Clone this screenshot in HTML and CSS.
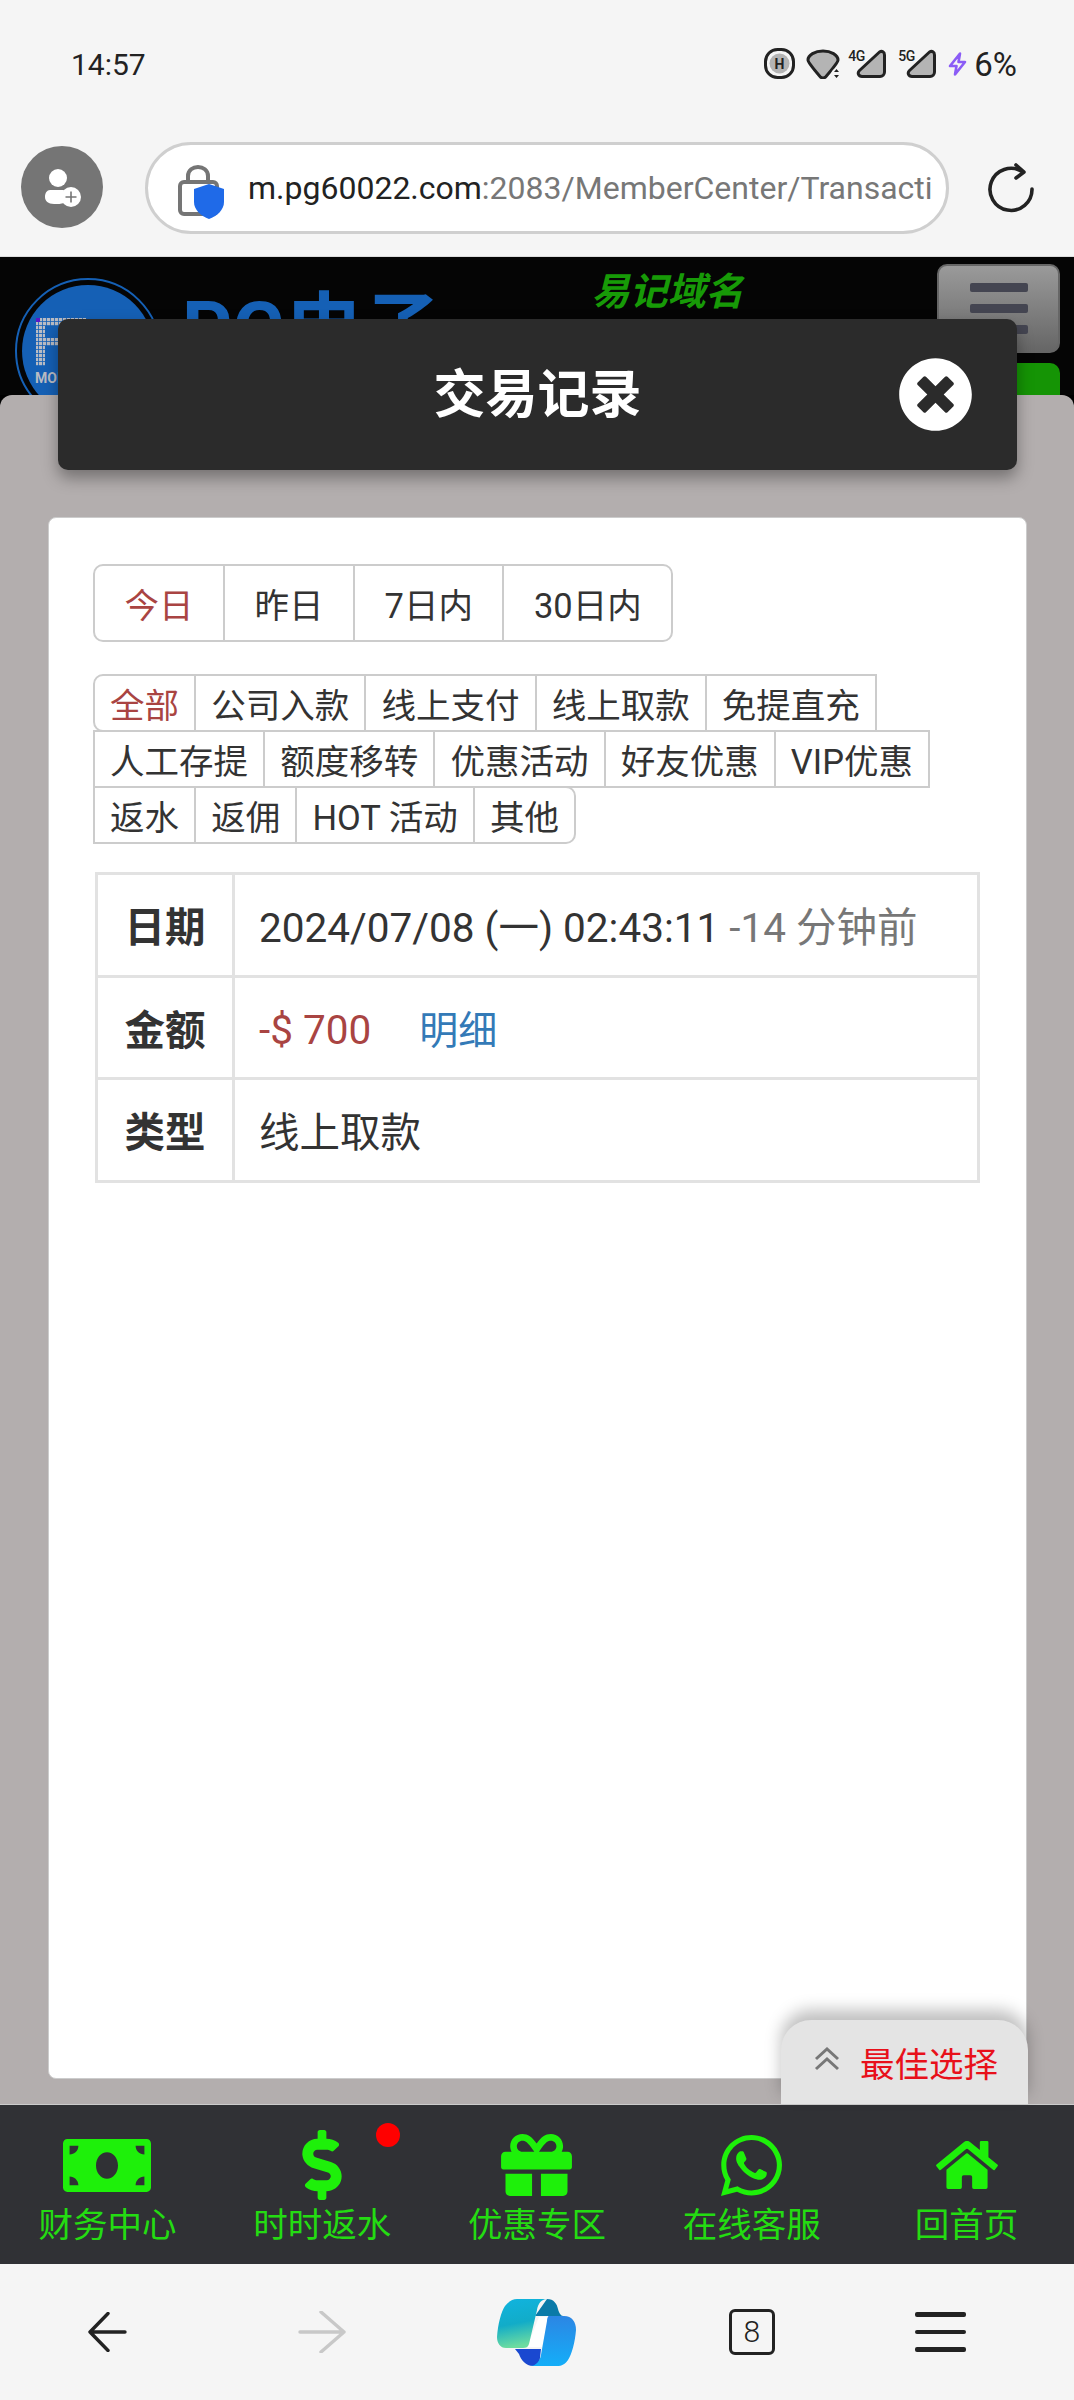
FILE: index.html
```html
<!DOCTYPE html>
<html lang="zh-CN">
<head>
    <meta charset="UTF-8">
    <meta name="viewport" content="width=device-width, initial-scale=1.0">
    <title>交易记录</title>
    <link rel="stylesheet" href="styles.css">
</head>
<body>
    <!-- phone status bar -->
    <div class="status-bar">
        <span class="clock">14:57</span>
        <div class="status-icons">
            <svg class="st-hd" viewBox="0 0 31 31"><rect x="1.5" y="1.5" width="28" height="28" rx="12" fill="none" stroke="#222" stroke-width="3"/><circle cx="15.5" cy="15.5" r="10" fill="#b4b4b4"/><text x="15.500" y="20.500" class="st-hd-text">H</text></svg>
            <svg class="st-wifi" viewBox="0 0 34 30"><path d="M2 11C2 6 9 2 17 2s15 4 15 9c0 2-9 13-12 16.500-1.800 2-4.200 2-6 0C11 24 2 13 2 11z" fill="#b4b4b4" stroke="#222" stroke-width="3" stroke-linejoin="round"/><circle cx="30.500" cy="24.500" r="5" fill="#f5f5f5"/><path d="M30.500 20l-2.500 3h5zM30.500 29l-2.500-3h5z" fill="#222"/></svg>
            <div class="st-signal">
                <span class="st-net">4G</span>
                <svg viewBox="0 0 31 30"><path d="M23.500 3L3.500 21.500C1 24 2.500 27.500 6 27.500h18c2.500 0 4.500-2 4.500-4.500V6c0-3-2.500-4.500-5-3z" fill="#b4b4b4" stroke="#222" stroke-width="3" stroke-linejoin="round"/></svg>
            </div>
            <div class="st-signal">
                <span class="st-net">5G</span>
                <svg viewBox="0 0 31 30"><path d="M23.500 3L3.500 21.500C1 24 2.500 27.500 6 27.500h18c2.500 0 4.500-2 4.500-4.500V6c0-3-2.500-4.500-5-3z" fill="#b4b4b4" stroke="#222" stroke-width="3" stroke-linejoin="round"/></svg>
            </div>
            <svg class="st-bolt" viewBox="0 0 19 24"><path d="M12 1.500L2 14h6.500L7 22.500 17 10h-6.500z" fill="none" stroke="#8b5cf6" stroke-width="2.600" stroke-linejoin="round"/></svg>
            <span class="battery">6%</span>
        </div>
    </div>

    <!-- browser address bar -->
    <div class="toolbar">
        <div class="avatar">
            <svg viewBox="0 0 82 82" width="82" height="82">
                <circle cx="37" cy="32" r="9" fill="#fff"/>
                <path d="M29 44h14c-2 4-2 9 0 13-3 1-6 1-10 1-6 0-9-3-9-7s2-7 5-7z" fill="#fff"/>
                <circle cx="50" cy="51" r="10" fill="#fff"/>
                <path d="M50 45.500v11M44.500 51h11" stroke="#757575" stroke-width="1.600"/>
            </svg>
        </div>
        <div class="url-box">
            <svg class="lock" viewBox="0 0 46 55" width="46" height="55">
                <path d="M10 20v-8c0-12 20-12 20 0v8" fill="none" stroke="#757575" stroke-width="4"/>
                <rect x="2" y="18" width="37" height="32" rx="4" fill="none" stroke="#757575" stroke-width="4"/>
                <path d="M31 20l15 5v13c0 8-7 14-15 17-8-3-15-9-15-17V25z" fill="#1f6ae8"/>
            </svg>
            <div class="url"><b>m.pg60022.com</b>:2083/MemberCenter/Transacti</div>
        </div>
        <svg class="reload" viewBox="0 0 50 50" width="50" height="50">
            <path d="M36 8.500A21 21 0 1 0 46 26" fill="none" stroke="#222" stroke-width="3.600" stroke-linecap="round"/>
            <path d="M30 2l8 7-8 6" fill="none" stroke="#222" stroke-width="3.600" stroke-linecap="round" stroke-linejoin="round"/>
        </svg>
    </div>

    <div class="site">
        <header class="site-header">
            <svg class="logo" viewBox="0 0 146 146" width="146" height="146">
                <defs>
                    <pattern id="dots" width="4" height="4" patternUnits="userSpaceOnUse"><rect width="3.200" height="3.200" fill="#b9bcc4"/></pattern>
                </defs>
                <circle cx="73" cy="73" r="72" fill="none" stroke="#1560b5" stroke-width="2"/>
                <circle cx="73" cy="73" r="66" fill="#1560b5"/>
                <path d="M21 40h50v28H30v20h-9zM30 48v12h32V48z" fill="url(#dots)"/>
                <rect x="21" y="40" width="4" height="4" fill="#5a18c8"/>
                <text x="20" y="105" class="logo-text">MOBILE</text>
            </svg>
            <div class="site-name">PG电子</div>
            <div class="slogan">易记域名</div>
            <div class="header-right">
                <div class="menu-btn"><i></i><i></i><i></i></div>
                <div class="green-btn"></div>
            </div>
        </header>

        <section class="panel">
            <div class="panel-title">
                <h2>交易记录</h2>
                <svg class="close-icon" viewBox="0 0 512 512" width="75" height="75"><path fill="#fff" d="M256 8C119 8 8 119 8 256s111 248 248 248 248-111 248-248S393 8 256 8zm121.600 313.100c4.700 4.700 4.700 12.300 0 17L338 377.600c-4.700 4.700-12.300 4.700-17 0L256 312l-65.100 65.600c-4.700 4.700-12.300 4.700-17 0L134.400 338c-4.700-4.700-4.700-12.300 0-17l65.600-65-65.600-65.100c-4.700-4.700-4.700-12.300 0-17l39.600-39.600c4.700-4.700 12.300-4.700 17 0l65 65.700 65.100-65.600c4.700-4.700 12.300-4.700 17 0l39.600 39.600c4.700 4.700 4.700 12.300 0 17L312 256l65.600 65.100z"/></svg>
            </div>

            <div class="card">
                <div class="date-tabs">
                    <a class="active">今日</a><a>昨日</a><a>7日内</a><a>30日内</a>
                </div>
                <div class="type-tabs">
                    <a class="active">全部</a><a>公司入款</a><a>线上支付</a><a>线上取款</a><a>免提直充</a>
                    <a>人工存提</a><a>额度移转</a><a>优惠活动</a><a>好友优惠</a><a>VIP优惠</a>
                    <a>返水</a><a>返佣</a><a>HOT 活动</a><a>其他</a>
                </div>
                <table class="record">
                    <tr>
                        <th>日期</th>
                        <td>2024/07/08 (一) 02:43:11 <span class="ago">-14 分钟前</span></td>
                    </tr>
                    <tr>
                        <th>金额</th>
                        <td><span class="amount">-$ 700</span><a class="detail">明细</a></td>
                    </tr>
                    <tr>
                        <th>类型</th>
                        <td>线上取款</td>
                    </tr>
                </table>
            </div>

            <div class="best-pick">
                <svg viewBox="0 0 26 24" width="26" height="24"><path d="M2 12L13 2l11 10M2 22l11-10 11 10" fill="none" stroke="#777" stroke-width="3"/></svg>
                <span>最佳选择</span>
            </div>
        </section>
    </div>

    <!-- site bottom nav -->
    <nav class="bottom-nav">
        <a class="nav-item">
            <span class="nav-icon"><svg viewBox="0 64 640 384" width="88" height="53"><path d="M608 64H32C14.330 64 0 78.330 0 96v320c0 17.670 14.330 32 32 32h576c17.670 0 32-14.330 32-32V96c0-17.670-14.330-32-32-32zM48 400v-64c35.350 0 64 28.650 64 64H48zm0-224v-64h64c0 35.350-28.650 64-64 64zm272 176c-44.190 0-80-42.990-80-96 0-53.020 35.820-96 80-96s80 42.980 80 96c0 53.030-35.830 96-80 96zm272 48h-64c0-35.350 28.650-64 64-64v64zm0-224c-35.350 0-64-28.650-64-64h64v64z"/></svg></span>
            财务中心
        </a>
        <a class="nav-item">
            <span class="nav-icon"><svg viewBox="0 0 288 512" width="40" height="70"><path d="M209.200 233.400l-108-31.600C88.700 198.200 80 186.500 80 173.500c0-16.300 13.200-29.500 29.500-29.500h66.300c12.200 0 24.200 3.700 34.200 10.500 6.100 4.100 14.300 3.100 19.500-2l34.800-34c7.100-6.900 6.100-18.400-1.800-24.500C238 74.800 207.400 64.100 176 64V16c0-8.800-7.200-16-16-16h-32c-8.800 0-16 7.200-16 16v48h-2.500C45.800 64-5.400 118.700.5 183.600c4.200 46.100 39.400 83.600 83.800 96.600l102.500 30c12.500 3.700 21.200 15.300 21.200 28.300 0 16.300-13.200 29.500-29.500 29.500h-66.300C100 368 88 364.300 78 357.500c-6.100-4.100-14.300-3.100-19.500 2l-34.800 34c-7.100 6.900-6.100 18.400 1.800 24.500 24.500 19.200 55.100 29.900 86.500 30v48c0 8.800 7.200 16 16 16h32c8.800 0 16-7.200 16-16v-48.200c46.600-.9 90.300-28.600 105.700-72.700 21.500-61.600-14.600-124.800-72.500-141.700z"/></svg><i class="red-dot"></i></span>
            时时返水
        </a>
        <a class="nav-item">
            <span class="nav-icon"><svg viewBox="0 32 512 448" width="71" height="62"><path d="M32 448c0 17.700 14.300 32 32 32h160V320H32v128zm256 32h160c17.700 0 32-14.300 32-32V320H288v160zm192-320h-42.100c6.200-12.100 10.100-25.500 10.100-40 0-48.500-39.500-88-88-88-41.600 0-68.500 21.300-103 68.300-34.500-47-61.400-68.300-103-68.300-48.500 0-88 39.500-88 88 0 14.500 3.800 27.900 10.100 40H32c-17.700 0-32 14.300-32 32v80c0 8.800 7.200 16 16 16h480c8.800 0 16-7.200 16-16v-80c0-17.700-14.300-32-32-32zm-326.100 0c-22.100 0-40-17.900-40-40s17.900-40 40-40c19.900 0 34.600 3.300 86.100 80h-86.100zm206.100 0h-86.100c51.400-76.500 65.700-80 86.100-80 22.100 0 40 17.900 40 40s-17.900 40-40 40z"/></svg></span>
            优惠专区
        </a>
        <a class="nav-item">
            <span class="nav-icon"><svg viewBox="0 32 448 448" width="61" height="61"><path d="M380.900 97.100C339 55.100 283.200 32 223.900 32c-122.400 0-222 99.600-222 222 0 39.100 10.200 77.300 29.600 111L0 480l117.700-30.900c32.400 17.700 68.900 27 106.100 27h.1c122.300 0 224.100-99.600 224.100-222 0-59.300-25.200-115-67.100-157zm-157 341.600c-33.200 0-65.700-8.900-94-25.700l-6.700-4-69.800 18.300L72 359.200l-4.400-7c-18.500-29.400-28.200-63.300-28.200-98.200 0-101.700 82.800-184.500 184.600-184.500 49.300 0 95.600 19.200 130.400 54.100 34.800 34.900 56.200 81.200 56.100 130.500 0 101.800-84.900 184.600-186.600 184.600zm101.200-138.200c-5.500-2.800-32.800-16.200-37.900-18-5.100-1.900-8.800-2.800-12.500 2.800-3.700 5.600-14.300 18-17.600 21.800-3.200 3.700-6.500 4.200-12 1.400-32.600-16.300-54-29.100-75.500-66-5.700-9.800 5.700-9.100 16.300-30.300 1.800-3.700.9-6.900-.5-9.700-1.400-2.800-12.500-30.100-17.100-41.200-4.500-10.800-9.100-9.300-12.500-9.500-3.200-.2-6.900-.2-10.600-.2-3.700 0-9.700 1.400-14.800 6.900-5.100 5.600-19.400 19-19.400 46.300 0 27.300 19.900 53.700 22.600 57.400 2.800 3.700 39.100 59.700 94.800 83.800 35.200 15.200 49 16.500 66.600 13.900 10.700-1.600 32.800-13.400 37.400-26.400 4.600-13 4.600-24.100 3.200-26.400-1.300-2.500-5-3.900-10.500-6.600z"/></svg></span>
            在线客服
        </a>
        <a class="nav-item">
            <span class="nav-icon"><svg viewBox="0 32 576 448" width="62" height="48"><path d="M280.370 148.260L96 300.110V464a16 16 0 0 0 16 16l112.060-.29a16 16 0 0 0 15.920-16V368a16 16 0 0 1 16-16h64a16 16 0 0 1 16 16v95.640a16 16 0 0 0 16 16.050L464 480a16 16 0 0 0 16-16V300L295.670 148.260a12.190 12.190 0 0 0-15.300 0zM571.600 251.470L488 182.560V44.050a12 12 0 0 0-12-12h-56a12 12 0 0 0-12 12v72.610L318.470 43a48 48 0 0 0-61 0L4.340 251.470a12 12 0 0 0-1.600 16.900l25.500 31A12 12 0 0 0 45.150 301l235.220-193.740a12.190 12.190 0 0 1 15.300 0L530.900 301a12 12 0 0 0 16.900-1.600l25.500-31a12 12 0 0 0-1.700-16.930z"/></svg></span>
            回首页
        </a>
    </nav>

    <!-- browser bottom bar -->
    <div class="browser-bar">
        <svg viewBox="0 0 40 40" width="40" height="40"><path d="M21 1.500L3 20l18 18.500M3 20h35" fill="none" stroke="#222" stroke-width="3.400" stroke-linecap="round" stroke-linejoin="round"/></svg>
        <svg viewBox="0 0 48 42" width="48" height="42"><path d="M23 1l23 20-23 20M2 21h44" fill="none" stroke="#c8c8c8" stroke-width="3.400" stroke-linecap="round" stroke-linejoin="round"/></svg>
        <svg class="copilot" viewBox="0 0 80 68" width="80" height="68">
            <defs>
                <linearGradient id="cpLeft" x1="0" y1="0" x2="0.2" y2="1"><stop offset="0" stop-color="#10b4e0"/><stop offset=".55" stop-color="#12acc8"/><stop offset="1" stop-color="#6cdca0"/></linearGradient>
                <linearGradient id="cpRight" x1="0" y1="0" x2="0" y2="1"><stop offset="0" stop-color="#2c86e4"/><stop offset="1" stop-color="#14aef8"/></linearGradient>
            </defs>
            <path d="M50 0c7 0 10 5 11 10 1 4 3 7 5 7H38z" fill="#0a7aa8"/>
            <path d="M18 50h26l-2 17H36c-7 0-12-6-14-12z" fill="#1a48d0"/>
            <path d="M42 18h10l-7 30H30z" fill="#fff"/>
            <path d="M20 0h30c-6 0-9 5-10 11l-8 34c-1 3-3 4-6 4H9c-6 0-9-5-9-11C1 25 4 13 8 7c3-4 7-7 12-7z" fill="url(#cpLeft)"/>
            <path d="M52 17h15c8 0 12 6 12 14-1 12-4 24-8 30-3 4-6 6-11 6H33c6 0 10-5 11-11l6-34c0-3 1-5 2-5z" fill="url(#cpRight)"/>
        </svg>
        <div class="tab-count">8</div>
        <div class="browser-menu"><i></i><i></i><i></i></div>
    </div>
</body>
</html>
```

FILE: styles.css
```css
* {
    box-sizing: border-box;
    margin: 0;
    padding: 0;
}

html, body {
    height: 2400px;
    overflow: hidden;
}

body {
    width: 1074px;
    display: flex;
    flex-direction: column;
    font-family: Roboto, "Noto Sans CJK SC", sans-serif;
    background: #f5f5f5;
    color: #333;
}

/* status bar */
.status-bar {
    height: 130px;
    padding: 48px 57px 0 71px;
    display: flex;
    justify-content: space-between;
    align-items: flex-start;
    color: #222;
}

.clock {
    font-size: 30px;
    line-height: 34px;
}

.status-icons {
    display: flex;
    align-items: center;
    height: 31px;
}

.st-hd {
    width: 31px;
    height: 31px;
    margin-right: 11px;
}

.st-hd-text {
    font-size: 14px;
    font-weight: 700;
    text-anchor: middle;
    fill: #222;
}

.st-wifi {
    width: 34px;
    height: 30px;
    margin-right: 8px;
}

.st-signal {
    position: relative;
    width: 39px;
    height: 30px;
    margin-right: 11px;
    display: flex;
    justify-content: flex-end;
}

.st-signal svg {
    width: 31px;
    height: 30px;
}

.st-net {
    position: absolute;
    left: 0;
    top: -1px;
    font-size: 14px;
    font-weight: 500;
    letter-spacing: -0.5px;
}

.st-bolt {
    width: 19px;
    height: 24px;
    margin-right: 7px;
}

.battery {
    font-size: 33px;
    line-height: 33px;
    margin-top: 2px;
}

/* address bar */
.toolbar {
    height: 127px;
    padding: 12px 14px 0 21px;
    display: flex;
    align-items: flex-start;
    border-bottom: 1px solid #ddd;
}

.avatar {
    width: 82px;
    height: 82px;
    margin-top: 4px;
    border-radius: 50%;
    background: #757575;
}

.url-box {
    width: 804px;
    height: 92px;
    margin-left: 42px;
    padding: 0 19px 0 30px;
    display: flex;
    align-items: center;
    background: #fff;
    border: 3px solid #cfcfcf;
    border-radius: 46px;
}

.lock {
    flex-shrink: 0;
    margin-top: 6px;
}

.url {
    margin-left: 24px;
    font-size: 32px;
    color: #777;
    white-space: nowrap;
}

.url b {
    font-weight: 400;
    color: #222;
}

.reload {
    margin: 21px 0 0 37px;
}

/* site behind the dialog */
.site {
    flex: 1;
    min-height: 0;
    display: flex;
    flex-direction: column;
    background: #000;
}

.site-header {
    height: 138px;
    flex-shrink: 0;
    padding: 7px 14px 0 15px;
    display: flex;
    align-items: flex-start;
    overflow: hidden;
    background: #050505;
}

.logo {
    flex-shrink: 0;
    margin-top: 14px;
}

.logo-text {
    font-size: 14px;
    font-weight: 700;
    fill: #b9bcc4;
    font-family: Roboto, sans-serif;
}

.site-name {
    margin: 23px 0 0 21px;
    font-size: 78px;
    font-weight: 700;
    line-height: 88px;
    color: #1560b5;
}

.slogan {
    margin: 4px 0 0 150px;
    font-size: 38px;
    font-weight: 700;
    font-style: italic;
    line-height: 48px;
    color: #179a07;
}

.header-right {
    margin-left: auto;
    width: 123px;
}

.menu-btn {
    height: 89px;
    padding-top: 17px;
    display: flex;
    flex-direction: column;
    align-items: center;
    gap: 12px;
    background: linear-gradient(#9a9a9a, #666);
    border: 2px solid #666;
    border-radius: 10px;
}

.menu-btn i {
    width: 58px;
    height: 9px;
    border-radius: 2px;
    background: #444551;
}

.green-btn {
    height: 60px;
    margin-top: 10px;
    background: #159405;
    border-radius: 10px;
}

/* dialog */
.panel {
    position: relative;
    flex: 1;
    min-height: 0;
    padding-top: 1px;
    background: #b3aeae;
    border-radius: 12px 12px 0 0;
}

.panel-title {
    position: relative;
    height: 151px;
    margin: -77px 57px 0 58px;
    display: flex;
    align-items: center;
    justify-content: center;
    color: #fff;
    background: #2b2b2b;
    border-radius: 10px;
    box-shadow: 0 8px 16px rgba(0, 0, 0, 0.35);
}

.panel-title h2 {
    margin-top: -9px;
    font-size: 52px;
    font-weight: 700;
}

.close-icon {
    position: absolute;
    right: 44px;
    top: 38px;
}

.card {
    height: 1562px;
    margin: 47px 47px 0 48px;
    padding: 46px 44px 0;
    background: #fff;
    border: 1px solid #ccc;
    border-radius: 8px;
}

.date-tabs {
    display: flex;
}

.date-tabs a {
    height: 78px;
    margin-right: -2px;
    padding: 0 29.5px;
    display: flex;
    align-items: center;
    font-size: 34.5px;
    border: 2px solid #ccc;
}

.date-tabs a:first-child, .type-tabs a:first-child {
    border-radius: 10px 0 0 10px;
}

.date-tabs a:last-child, .type-tabs a:last-child {
    border-radius: 0 10px 10px 0;
}

.date-tabs a.active, .type-tabs a.active {
    color: #a94442;
}

.type-tabs {
    margin-top: 32px;
    padding-bottom: 2px;
    display: flex;
    flex-wrap: wrap;
}

.type-tabs a {
    height: 58px;
    margin: 0 -2px -2px 0;
    padding: 0 15.1px;
    display: flex;
    align-items: center;
    font-size: 34.5px;
    white-space: nowrap;
    border: 2px solid #ccc;
}

.record {
    width: 885px;
    margin: 28px 0 0 2px;
    border-collapse: collapse;
    font-size: 40.5px;
}

.record th, .record td {
    height: 102.5px;
    border: 3px solid #e2e2e2;
}

.record th {
    width: 137px;
    font-weight: 700;
}

.record td {
    padding-left: 24px;
}

.ago {
    color: #777;
}

.amount {
    color: #a94442;
}

.detail {
    margin-left: 48px;
    font-size: 39px;
    color: #337ab7;
}

.best-pick {
    position: absolute;
    right: 46px;
    bottom: 0;
    width: 247px;
    height: 84px;
    padding: 17px 0 0 33px;
    display: flex;
    align-items: flex-start;
    gap: 20px;
    font-size: 34.5px;
    color: #e8101a;
    background: #e4e4e4;
    border-radius: 30px 30px 0 0;
    box-shadow: 0 -10px 16px rgba(0, 0, 0, 0.25);
}

.best-pick svg {
    margin-top: 10px;
}

/* bottom nav */
.bottom-nav {
    height: 160px;
    flex-shrink: 0;
    display: grid;
    grid-template-columns: repeat(5, 1fr);
    background: #303135;
    border-top: 1px solid #ccc;
}

.nav-item {
    display: flex;
    flex-direction: column;
    align-items: center;
    font-size: 34.5px;
    line-height: 46px;
    color: #24dc12;
}

.nav-icon {
    position: relative;
    height: 97px;
    padding-top: 23px;
    display: flex;
    align-items: center;
}

.nav-icon svg {
    fill: #1ef00a;
}

.red-dot {
    position: absolute;
    left: 74px;
    top: 18px;
    width: 24px;
    height: 24px;
    border-radius: 50%;
    background: #f00;
}

/* browser bottom bar */
.browser-bar {
    height: 136px;
    flex-shrink: 0;
    position: relative;
    display: grid;
    grid-template-columns: repeat(5, 1fr);
    justify-items: center;
    align-items: center;
}

.copilot {
    margin-top: 2px;
}

.tab-count {
    width: 46px;
    height: 46px;
    border: 3px solid #222;
    border-radius: 6px;
    font-size: 30px;
    font-weight: 300;
    line-height: 40px;
    text-align: center;
    color: #222;
}

.browser-menu {
    width: 51px;
    margin-right: 52px;
    display: flex;
    flex-direction: column;
    gap: 13px;
}

.browser-menu i {
    height: 4.500px;
    border-radius: 2px;
    background: #222;
}
```
